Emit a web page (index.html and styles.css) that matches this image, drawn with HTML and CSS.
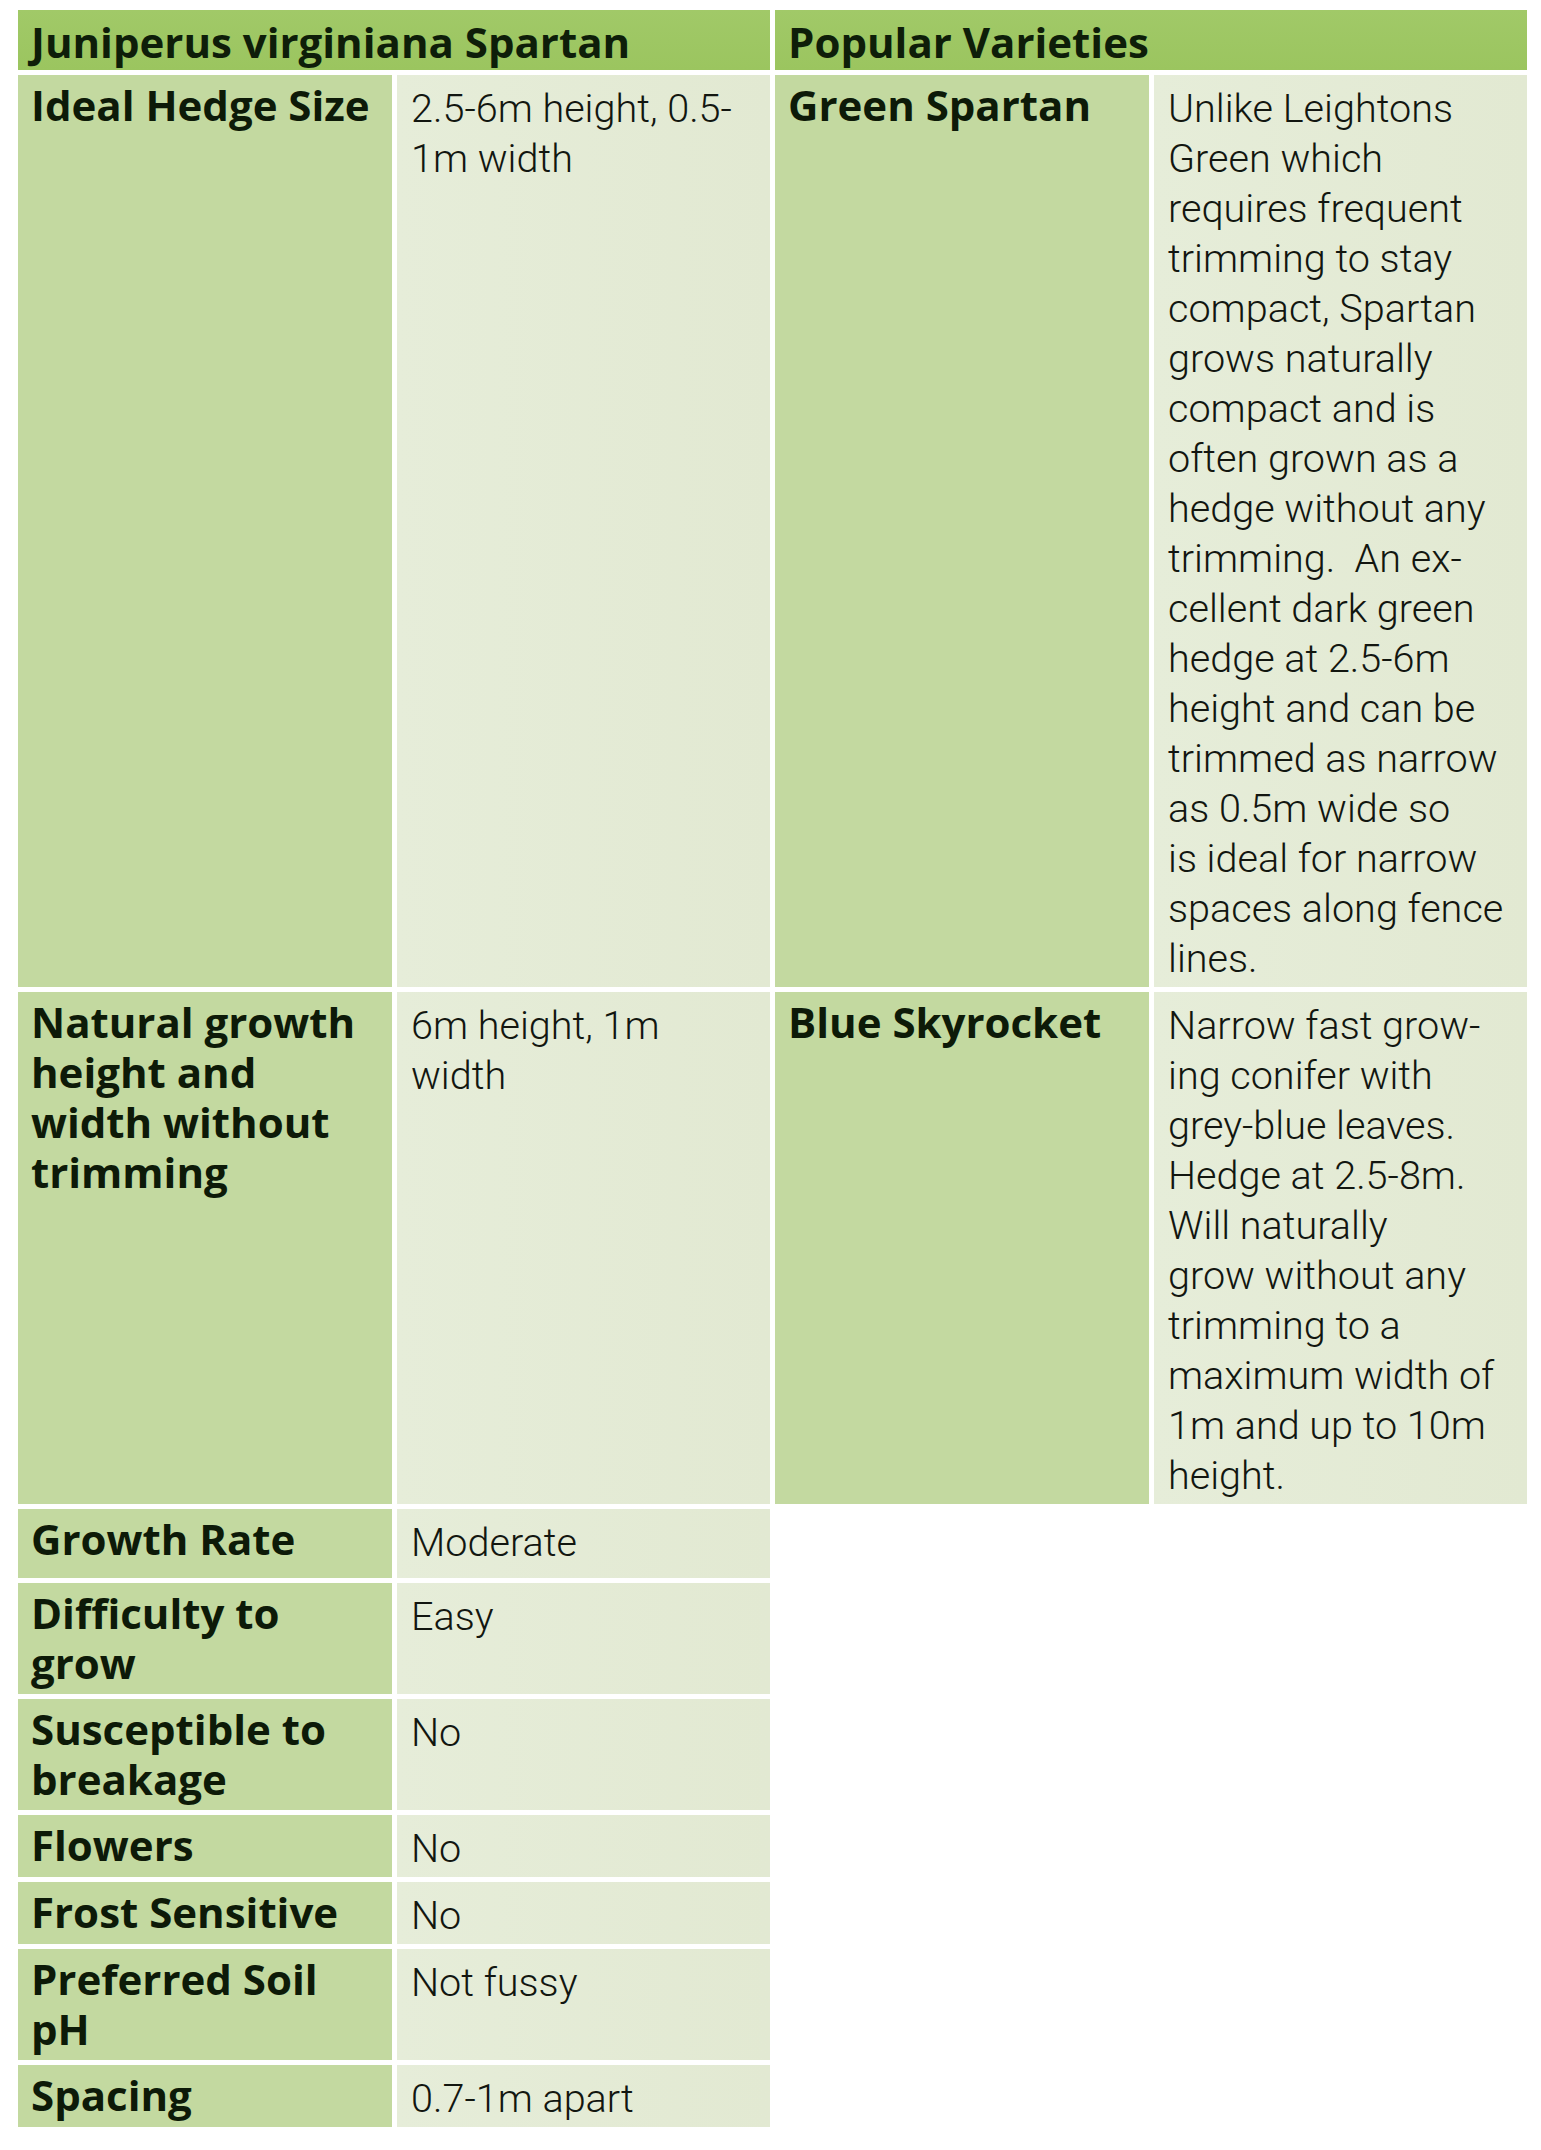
FILE: index.html
```html
<!DOCTYPE html>
<html lang="en">
<head>
<meta charset="utf-8">
<title>Juniperus virginiana Spartan</title>
<link rel="stylesheet" href="styles.css">
</head>
<body>
<table class="hedge-table">
  <colgroup>
    <col class="c-label">
    <col class="c-value">
    <col class="c-label">
    <col class="c-value">
  </colgroup>
  <thead>
    <tr>
      <th class="head" colspan="2">Juniperus virginiana Spartan</th>
      <th class="head" colspan="2">Popular Varieties</th>
    </tr>
  </thead>
  <tbody>
    <tr>
      <td class="label">Ideal Hedge Size</td>
      <td class="value">2.5-6m height, 0.5-<br>1m width</td>
      <td class="label">Green Spartan</td>
      <td class="value">Unlike Leightons<br>Green which<br>requires frequent<br>trimming to stay<br>compact, Spartan<br>grows naturally<br>compact and is<br>often grown as a<br>hedge without any<br>trimming.&nbsp; An ex-<br>cellent dark green<br>hedge at 2.5-6m<br>height and can be<br>trimmed as narrow<br>as 0.5m wide so<br>is ideal for narrow<br>spaces along fence<br>lines.</td>
    </tr>
    <tr>
      <td class="label">Natural growth<br>height and<br>width without<br>trimming</td>
      <td class="value">6m height, 1m<br>width</td>
      <td class="label">Blue Skyrocket</td>
      <td class="value">Narrow fast grow-<br>ing conifer with<br>grey-blue leaves.<br>Hedge at 2.5-8m.<br>Will naturally<br>grow without any<br>trimming to a<br>maximum width of<br>1m and up to 10m<br>height.</td>
    </tr>
    <tr class="row-tall">
      <td class="label">Growth Rate</td>
      <td class="value">Moderate</td>
    </tr>
    <tr>
      <td class="label">Difficulty to<br>grow</td>
      <td class="value">Easy</td>
    </tr>
    <tr>
      <td class="label">Susceptible to<br>breakage</td>
      <td class="value">No</td>
    </tr>
    <tr>
      <td class="label">Flowers</td>
      <td class="value">No</td>
    </tr>
    <tr>
      <td class="label">Frost Sensitive</td>
      <td class="value">No</td>
    </tr>
    <tr>
      <td class="label">Preferred Soil<br>pH</td>
      <td class="value">Not fussy</td>
    </tr>
    <tr>
      <td class="label">Spacing</td>
      <td class="value">0.7-1m apart</td>
    </tr>
  </tbody>
</table>
</body>
</html>
```

FILE: styles.css
```css
html, body {
  margin: 0;
  padding: 0;
  background: #ffffff;
}

.hedge-table {
  margin: 5px 0 0 13px;
  border-collapse: separate;
  border-spacing: 5px 5.5px;
  table-layout: fixed;
  width: 1519px;
}

.c-label { width: 374px; }
.c-value { width: 373px; }

.head {
  background: linear-gradient(180deg, #a1c968 0%, #9bc55f 100%);
  color: #0e1e09;
  font-family: "Open Sans", "Noto Sans", sans-serif;
  font-weight: 700;
  font-size: 42px;
  line-height: 50px;
  text-align: left;
  padding: 7px 13px 3px 13px;
  height: 50px;
  white-space: nowrap;
}

.label,
.value {
  vertical-align: top;
  text-align: left;
  white-space: nowrap;
  line-height: 50px;
}

.label {
  background: #c3d9a0;
  color: #0d1a08;
  font-family: "Open Sans", "Noto Sans", sans-serif;
  font-weight: 700;
  font-size: 42px;
  padding: 5px 12px 6px 13px;
}

.value {
  background: linear-gradient(90deg, #e6edd9 0%, #e2e9d2 100%);
  color: #121610;
  font-family: Roboto, "Liberation Sans", sans-serif;
  font-weight: 300;
  font-size: 39.6px;
  padding: 9px 12px 3px 14px;
}

.row-tall .label,
.row-tall .value {
  height: 57px;
}
```
